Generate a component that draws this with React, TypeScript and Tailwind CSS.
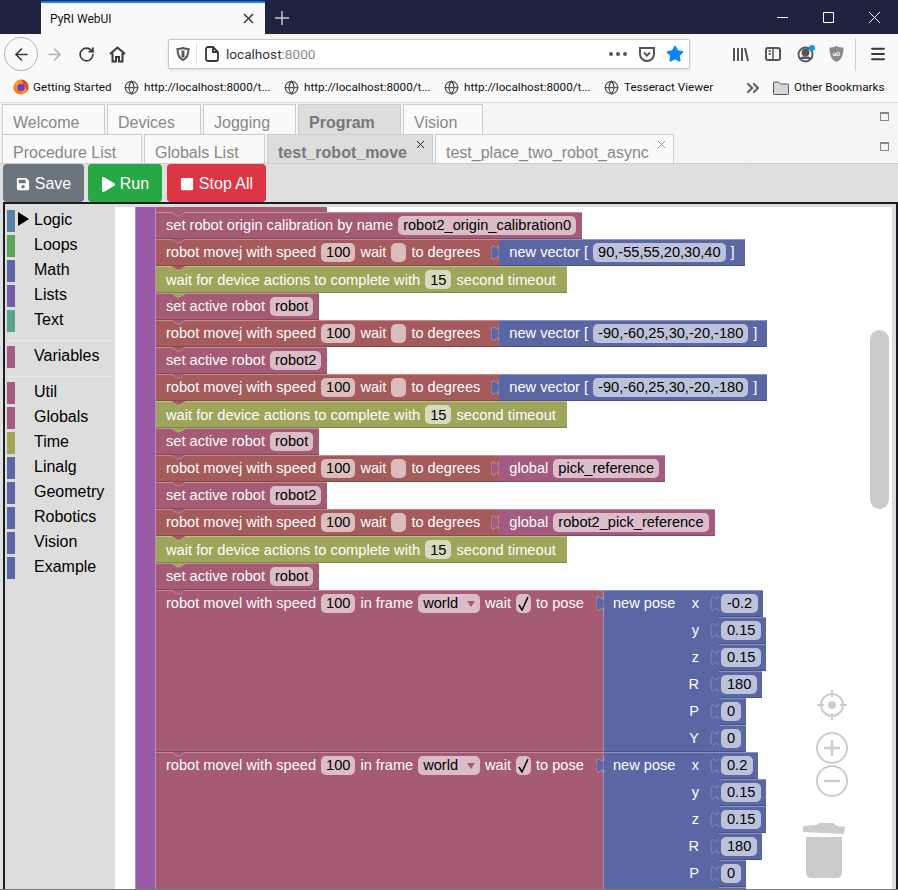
import { ArrowLeft, ArrowRight, ChevronsRight, Globe, Menu, RotateCw, Star } from 'lucide-react';
import { FaPlay, FaSave, FaStop } from 'react-icons/fa';

const sans = "font-['Liberation_Sans',Arial,sans-serif]";
const ui = "font-['Roboto','Noto_Sans',sans-serif]";

const tone = {
  rose: { box: 'bg-[#a55b74] border-t-[#c08c9e] border-b-[#84495d]', fill: '#a55b74' },
  red: { box: 'bg-[#a55b5b] border-t-[#c08c8c] border-b-[#844949]', fill: '#a55b5b' },
  olive: { box: 'bg-[#9fa55b] border-t-[#bcc08c] border-b-[#7f8449]', fill: '#9fa55b' },
  blue: { box: 'bg-[#5b67a5] border-t-[#8c95c0] border-b-[#495284]', fill: '#5b67a5' },
  magenta: { box: 'bg-[#a55b80] border-t-[#c08ca6] border-b-[#844966]', fill: '#a55b80' },
};
type Tone = keyof typeof tone;

function Label({ children }: { children: React.ReactNode }) {
  return <span className="whitespace-nowrap text-white">{children}</span>;
}

function Field({ children, blue, wide }: { children?: React.ReactNode; blue?: boolean; wide?: boolean }) {
  return (
    <span
      className={`flex h-[19px] min-w-[15px] items-center justify-center whitespace-nowrap rounded-[5px] text-black ${
        wide ? 'px-[6px]' : 'px-[5px]'
      } ${blue ? 'bg-[#bdc2db]' : 'bg-white/60'}`}
    >
      {children}
    </span>
  );
}

function Notch({ from }: { from: Tone }) {
  return (
    <svg className="absolute left-[15px] top-[-1px] z-10" width="15" height="5" viewBox="0 0 15 5">
      <path d="M0 0l6 4h3l6-4z" fill={tone[from].fill} />
      <path d="M0 0l6 4h3l6-4" fill="none" stroke="#ffffff" strokeOpacity="0.25" />
    </svg>
  );
}

function Tab({ fill }: { fill: string }) {
  return (
    <svg className="absolute left-[-8px] top-[5px] z-10" width="8" height="15" viewBox="0 0 8 15">
      <path d="M8 0c0 10-8-8-8 7.5s8-2.5 8 7.5z" fill={fill} stroke="#ffffff" strokeOpacity="0.3" />
    </svg>
  );
}

function Vector({ value }: { value: string }) {
  return (
    <div className={`relative flex h-[27px] items-center gap-[5px] border-y pl-[10px] pr-[10px] ${tone.blue.box}`}>
      <Tab fill={tone.blue.fill} />
      <Label>new vector [</Label>
      <Field blue>{value}</Field>
      <Label>]</Label>
    </div>
  );
}

function Global({ name }: { name: string }) {
  return (
    <div className={`relative flex h-[27px] items-center gap-[5px] border-y pl-[10px] pr-[6px] ${tone.magenta.box}`}>
      <Tab fill={tone.magenta.fill} />
      <Label>global</Label>
      <Field>{name}</Field>
    </div>
  );
}

function Statement({ color, from, tight, children }: { color: Tone; from: Tone; tight?: boolean; children: React.ReactNode }) {
  return (
    <div className={`relative flex h-[27px] items-center gap-[5px] border-y pl-[10px] ${tight ? 'pr-[6px]' : 'pr-[11px] text-[14.67px]'} ${tone[color].box}`}>
      <Notch from={from} />
      {children}
    </div>
  );
}

function SetActive({ name, from }: { name: string; from: Tone }) {
  return (
    <Statement color="rose" from={from} tight>
      <Label>set active robot</Label>
      <Field>{name}</Field>
    </Statement>
  );
}

function WaitDevices({ from }: { from: Tone }) {
  return (
    <Statement color="olive" from={from}>
      <Label>wait for device actions to complete with</Label>
      <Field>15</Field>
      <Label>second timeout</Label>
    </Statement>
  );
}

function MoveJ({ from, children }: { from: Tone; children: React.ReactNode }) {
  return (
    <div className="flex">
      <div className={`relative flex h-[27px] items-center gap-[5px] border-y pl-[10px] pr-[19px] ${tone.red.box}`}>
        <Notch from={from} />
        <Label>robot movej with speed</Label>
        <Field>100</Field>
        <Label>wait</Label>
        <Field />
        <Label>to degrees</Label>
      </div>
      {children}
    </div>
  );
}

const pose1 = [
  ['x', '-0.2'],
  ['y', '0.15'],
  ['z', '0.15'],
  ['R', '180'],
  ['P', '0'],
  ['Y', '0'],
];
// the sixth row of this block only shows its top edge at the bottom of the page
const pose2 = [
  ['x', '0.2'],
  ['y', '0.15'],
  ['z', '0.15'],
  ['R', '180'],
  ['P', '0'],
  ['', '\u2007'],
];

function MoveL({ rows }: { rows: string[][] }) {
  return (
    <div className="flex">
      <div className={`relative flex h-[162px] w-[447px] items-start gap-[5px] border-y pl-[10px] pt-[3px] ${tone.rose.box}`}>
        <Notch from="rose" />
        <div className="flex h-[19px] items-center gap-[5px]">
          <Label>robot movel with speed</Label>
          <Field>100</Field>
          <Label>in frame</Label>
          <Field>
            world
            <svg className="ml-[9px]" width="8" height="6" viewBox="0 0 8 6">
              <path d="M0 0h8L4 6z" fill="#a55b74" />
            </svg>
          </Field>
          <Label>wait</Label>
          <span className="flex h-[19px] w-[15px] items-center justify-center rounded-[5px] bg-white/60">
            <svg width="11" height="15" viewBox="0 0 11 15" fill="none" stroke="#000000" strokeWidth="1.500">
              <path d="M1 9l3 5 6-13" />
            </svg>
          </span>
          <Label>to pose</Label>
        </div>
      </div>
      <div className={`relative flex h-[162px] w-[116px] items-start border-y border-l border-l-[#8c95c0] pl-[9px] ${tone.blue.box}`}>
        <Tab fill={tone.blue.fill} />
        <div className="flex h-[25px] items-center">
          <Label>new pose</Label>
        </div>
      </div>
      <div className="relative flex w-[60px] flex-col items-start">
        {rows.map(([axis, value]) => (
          <div key={axis} className="flex h-[27px]">
            <span className="absolute left-[-36px] flex h-[27px] w-[16px] items-center justify-end text-white">{axis}</span>
            <div className={`relative flex h-[27px] items-center border-y pl-[2px] pr-[5px] ${tone.blue.box}`}>
              <svg className="absolute left-[-9px] top-[5px]" width="9" height="15" viewBox="0 0 9 15">
                <path d="M8 0c0 10-7-8-7 7.500s7-2.500 7 7.500" fill="none" stroke="#8c95c0" strokeOpacity="0.8" />
              </svg>
              <Field blue wide>
                {value}
              </Field>
            </div>
          </div>
        ))}
      </div>
    </div>
  );
}

const categories = [
  ['Logic', 'bg-[#5b80a5]'],
  ['Loops', 'bg-[#5ba55b]'],
  ['Math', 'bg-[#5b67a5]'],
  ['Lists', 'bg-[#745ba5]'],
  ['Text', 'bg-[#5ba58c]'],
];
const extras = [
  ['Util', 'bg-[#a55b80]'],
  ['Globals', 'bg-[#a55b80]'],
  ['Time', 'bg-[#9fa55b]'],
  ['Linalg', 'bg-[#5b67a5]'],
  ['Geometry', 'bg-[#5b67a5]'],
  ['Robotics', 'bg-[#5b67a5]'],
  ['Vision', 'bg-[#5b67a5]'],
  ['Example', 'bg-[#5b67a5]'],
];

function Category({ name, color, open }: { name: string; color: string; open?: boolean }) {
  return (
    <div className="flex h-[25px] items-start pl-[2px]">
      <span className={`h-[22px] w-[8px] ${color}`} />
      <span className="flex h-[18px] w-[19px] items-center justify-end pr-[5px]">
        {open && <span className="h-0 w-0 border-y-[7px] border-l-[11px] border-y-transparent border-l-black" />}
      </span>
      <span className="text-[16px] leading-[20px] text-black">{name}</span>
    </div>
  );
}

function Sidebar() {
  return (
    <div className={`flex w-[110px] shrink-0 flex-col bg-[#dddddd] pt-[6px] ${sans}`}>
      {categories.map(([name, color], i) => (
        <Category key={name} name={name} color={color} open={i === 0} />
      ))}
      <div className="my-[5px] ml-[2px] h-px bg-[#e8e8e8]" />
      <Category name="Variables" color="bg-[#a55b80]" />
      <div className="my-[5px] ml-[2px] h-px bg-[#e8e8e8]" />
      {extras.map(([name, color]) => (
        <Category key={name} name={name} color={color} />
      ))}
    </div>
  );
}

function WorkspaceControls() {
  return (
    <>
      <div className="absolute right-[3px] top-[123px] h-[179px] w-[19px] rounded-full bg-[#cccccc]" />
      <svg className="absolute left-[698px] top-[480px]" width="40" height="40" viewBox="0 0 40 40" fill="none" stroke="#cccccc" strokeWidth="2">
        <circle cx="19" cy="18" r="11" />
        <circle cx="19" cy="18" r="4" fill="#cccccc" stroke="none" />
        <path d="M19 3v7M19 26v7M4 18h7M27 18h7" />
      </svg>
      <svg className="absolute left-[700px] top-[524px]" width="34" height="68" viewBox="0 0 34 68" fill="none" stroke="#cccccc" strokeWidth="2">
        <circle cx="17" cy="17" r="15" />
        <path d="M9 17h16M17 9v16" strokeWidth="2.500" />
        <circle cx="17" cy="50" r="15" />
        <path d="M9 50h16" strokeWidth="2.500" />
      </svg>
      <svg className="absolute left-[688px] top-[616px]" width="42" height="56" viewBox="0 0 42 56" fill="#cccccc">
        <path d="M0 3l14-1 2-2h14l4 3 8 1-1 7L0 9z" />
        <path d="M3 14h36v36a5 5 0 0 1-5 5H8a5 5 0 0 1-5-5z" />
      </svg>
    </>
  );
}

function Workspace() {
  return (
    <div className="ml-[3px] flex min-h-0 flex-1 border-x-2 border-t-2 border-[#191c22] bg-[#dddddd] pr-[4px]">
      <Sidebar />
      <div className="relative mt-[3px] flex-1 overflow-hidden bg-white">
        <div className={`flex h-full pl-[20px] text-[14.6px] ${sans}`}>
          <div className="h-full w-[21px] shrink-0 border-x border-x-[#b88cc0] bg-[#995ba5]" />
          <div className="flex flex-col items-start self-start">
            <div className="h-[5px] w-[171px] bg-[#a55b74]" />
            <Statement color="rose" from="rose" tight>
              <Label>set robot origin calibration by name</Label>
              <Field>robot2_origin_calibration0</Field>
            </Statement>
            <MoveJ from="rose">
              <Vector value="90,-55,55,20,30,40" />
            </MoveJ>
            <WaitDevices from="red" />
            <SetActive name="robot" from="olive" />
            <MoveJ from="rose">
              <Vector value="-90,-60,25,30,-20,-180" />
            </MoveJ>
            <SetActive name="robot2" from="red" />
            <MoveJ from="rose">
              <Vector value="-90,-60,25,30,-20,-180" />
            </MoveJ>
            <WaitDevices from="red" />
            <SetActive name="robot" from="olive" />
            <MoveJ from="rose">
              <Global name="pick_reference" />
            </MoveJ>
            <SetActive name="robot2" from="red" />
            <MoveJ from="rose">
              <Global name="robot2_pick_reference" />
            </MoveJ>
            <WaitDevices from="red" />
            <SetActive name="robot" from="olive" />
            <MoveL rows={pose1} />
            <MoveL rows={pose2} />
          </div>
        </div>
        <WorkspaceControls />
      </div>
    </div>
  );
}

function PaneTab({ children, active, close, width }: { children: React.ReactNode; active?: boolean; close?: boolean; width: string }) {
  return (
    <div
      className={`relative flex h-full items-center whitespace-nowrap border border-b-0 border-[#cccccc] pl-[10px] pt-[7px] text-[16px] ${width} ${
        active ? 'bg-[#dddddd] font-bold text-[#777777]' : 'bg-[#fafafa] text-[#888888]'
      }`}
    >
      {children}
      {close && (
        <svg className="absolute right-[7px] top-[5px]" width="9" height="9" viewBox="0 0 9 9" stroke={active ? '#222222' : '#999999'}>
          <path d="M1 1l7 7M8 1l-7 7" fill="none" />
        </svg>
      )}
    </div>
  );
}

function MaxIcon() {
  return <span className="ml-auto mr-[9px] mt-[8px] h-[9px] w-[9px] border border-t-2 border-[#888888]" />;
}

function PaneTabs() {
  return (
    <div
      className={`flex h-[61px] flex-col border-b border-[#cccccc] bg-[#f5f5f5] bg-[repeating-linear-gradient(45deg,transparent_0,transparent_105px,#f0f0f0_105px,#f0f0f0_106px),repeating-linear-gradient(-45deg,transparent_0,transparent_105px,#f0f0f0_105px,#f0f0f0_106px)] pl-[2px] pt-px ${sans}`}
    >
      <div className="flex h-[30px] gap-[2px]">
        <PaneTab width="w-[103px]">Welcome</PaneTab>
        <PaneTab width="w-[94px]">Devices</PaneTab>
        <PaneTab width="w-[93px]">Jogging</PaneTab>
        <PaneTab width="w-[103px]" active>
          Program
        </PaneTab>
        <PaneTab width="w-[80px]">Vision</PaneTab>
        <MaxIcon />
      </div>
      <div className="flex h-[29px] gap-[2px]">
        <PaneTab width="w-[140px]">Procedure List</PaneTab>
        <PaneTab width="w-[121px]">Globals List</PaneTab>
        <PaneTab width="w-[166px]" active close>
          test_robot_move
        </PaneTab>
        <PaneTab width="w-[239px]" close>
          test_place_two_robot_async
        </PaneTab>
        <MaxIcon />
      </div>
    </div>
  );
}

function ActionBar() {
  return (
    <div className={`flex h-[38px] gap-[4px] bg-[#e0e0e0] pl-[3px] text-[16px] text-white ${sans}`}>
      <button className="flex w-[81px] items-center justify-center gap-[5px] rounded bg-[#6c757d] pt-[2px]">
        <FaSave size={14} />
        Save
      </button>
      <button className="flex w-[74px] items-center justify-center gap-[4px] rounded bg-[#28a745] pt-[2px]">
        <FaPlay size={15} />
        Run
      </button>
      <button className="ml-px flex w-[99px] items-center justify-center gap-[5px] rounded bg-[#dc3545] pt-[2px]">
        <FaStop size={14} />
        Stop All
      </button>
    </div>
  );
}

function FirefoxLogo() {
  return (
    <svg width="16" height="16" viewBox="0 0 16 16">
      <circle cx="8" cy="8" r="7.500" fill="#ff9a1f" />
      <path d="M8 .500a7.500 7.500 0 0 1 7.500 7.500c0 2-1 4-2 5 .5-3-1-6-3-7-.5-2-1.500-4-2.500-5.500z" fill="#e8402f" />
      <circle cx="8" cy="8.500" r="3.800" fill="#6a3fd0" />
      <path d="M1 6c1 5 5 8 10 7-3 3-8 2-10-2-.5-1.500-.5-3.500 0-5z" fill="#ff6a1f" />
    </svg>
  );
}

function Bookmark({ label, width }: { label: string; width: string }) {
  return (
    <div className="flex items-center gap-[5px]">
      <Globe size={15} className="text-[#55555a]" strokeWidth={2} />
      <span className={`whitespace-nowrap ${width}`}>{label}</span>
    </div>
  );
}

function BrowserChrome() {
  return (
    <div className={`text-[12px] text-[#111111] ${ui}`}>
      <div className="flex h-[34px] items-end bg-[#1f2340]">
        <div className="ml-[41px] flex h-[33px] w-[224px] items-center border-t-2 border-t-[#0a84ff] bg-[#f9f9fa] pl-[9px] pr-[11px]">
          <span>PyRI WebUI</span>
          <svg className="ml-auto" width="11" height="11" viewBox="0 0 11 11" stroke="#38383d" strokeWidth="1.500">
            <path d="M1 1l9 9M10 1l-9 9" />
          </svg>
        </div>
        <svg className="mb-[9px] ml-[10px]" width="14" height="14" viewBox="0 0 14 14" stroke="#c6c8d2" strokeWidth="1.500">
          <path d="M7 0v14M0 7h14" />
        </svg>
        <div className="mb-[11px] ml-auto flex items-center gap-[35px] pr-[18px]">
          <svg width="11" height="11" viewBox="0 0 11 11" stroke="#ffffff"><path d="M0 5.500h11" /></svg>
          <svg width="11" height="11" viewBox="0 0 11 11" stroke="#ffffff" fill="none"><path d="M.5.500h10v10H.5z" /></svg>
          <svg width="11" height="11" viewBox="0 0 11 11" stroke="#ffffff"><path d="M0 0l11 11M11 0L0 11" /></svg>
        </div>
      </div>

      <div className="flex h-[38px] items-center bg-[#f9f9fa] pt-[2px] text-[#38383d]">
        <div className="ml-[4px] flex h-[34px] w-[34px] items-center justify-center rounded-full border border-[#b1b1b3]">
          <ArrowLeft size={19} />
        </div>
        <ArrowRight size={19} className="ml-[7px] text-[#b1b1b3]" />
        <RotateCw size={17} strokeWidth={2.4} className="ml-[14px]" />
        <svg className="ml-[14px]" width="17" height="17" viewBox="0 0 17 17" fill="none" stroke="#38383d" strokeWidth="2">
          <path d="M1 8l7.500-6.500L16 8M3.500 7v8.500h3.500v-4.500h3v4.500h3.500V7" />
        </svg>
        <div className="ml-[42px] flex h-[30px] w-[522px] items-center rounded-[2px] border border-[#c8c8c8] bg-white shadow-sm">
          <svg className="ml-[7px]" width="14" height="14" viewBox="0 0 14 14" fill="none" stroke="#55555a" strokeWidth="2">
            <path d="M7 1c2 1 3.500 1 5.500 1 0 5-1 9-5.500 11C2.500 11 1.500 7 1.500 2 3.500 2 5 2 7 1z" />
            <path d="M7 3.500v7" strokeWidth="3" />
          </svg>
          <span className="ml-[6px] h-[24px] w-px bg-[#e5e5e5]" />
          <svg className="ml-[8px]" width="14" height="16" viewBox="0 0 14 16" fill="none" stroke="#38383d" strokeWidth="1.800">
            <path d="M3 1h5l5 5v7a2 2 0 0 1-2 2H3a2 2 0 0 1-2-2V3a2 2 0 0 1 2-2zM8 1v5h5" />
          </svg>
          <span className="ml-[7px] text-[13.6px]">
            localhost<span className="text-[#8a8a8f]">:8000</span>
          </span>
          <span className="ml-auto flex gap-[3px]">
            <span className="h-[4px] w-[4px] rounded-full bg-[#55555a]" />
            <span className="h-[4px] w-[4px] rounded-full bg-[#55555a]" />
            <span className="h-[4px] w-[4px] rounded-full bg-[#55555a]" />
          </span>
          <svg className="ml-[12px]" width="16" height="15" viewBox="0 0 16 15" fill="none" stroke="#55555a" strokeWidth="2">
            <path d="M1 1h14v6a7 7 0 0 1-14 0z" />
            <path d="M5 5.500l3 3 3-3" />
          </svg>
          <Star size={18} className="ml-[11px] mr-[5px] text-[#0a84ff]" fill="#0a84ff" />
        </div>
        <div className="ml-[43px] flex items-center text-[#55555a]">
          <svg width="16" height="15" viewBox="0 0 16 15" fill="none" stroke="#55555a" strokeWidth="2">
            <path d="M1 1v13M5 1v13M9 1v13M12 1l3 13" />
          </svg>
          <svg className="ml-[16px]" width="16" height="14" viewBox="0 0 16 14" fill="none" stroke="#55555a" strokeWidth="2">
            <rect x="1" y="1" width="14" height="12" rx="2" />
            <path d="M8 1v12M3.500 4H6M3.500 7H6" strokeWidth="1.500" />
          </svg>
          <svg className="ml-[16px]" width="18" height="18" viewBox="0 0 18 18" fill="none" stroke="#55555a" strokeWidth="1.800">
            <circle cx="8.500" cy="9.500" r="7" />
            <circle cx="8.500" cy="7.500" r="3" fill="#55555a" />
            <path d="M3.500 14c1-2.500 9-2.500 10 0" fill="#55555a" />
            <circle cx="15" cy="3" r="3" fill="#0a9dff" stroke="none" />
          </svg>
          <svg className="ml-[14px]" width="15" height="16" viewBox="0 0 15 16" fill="#8a8a8f">
            <path d="M7.500 0c2.500 1 4.500 1.500 7 1.500 0 7-1.500 12-7 14.500C2 13.500.5 8.500.5 1.500 3 1.500 5 1 7.500 0z" />
            <text x="7.500" y="9.500" fontSize="6" fontWeight="700" fill="#ffffff" stroke="none" textAnchor="middle">
              uO
            </text>
          </svg>
          <span className="ml-[11px] h-[33px] w-px bg-[#d0d0d0]" />
          <Menu size={18} className="ml-[13px] text-[#38383d]" strokeWidth={2.4} />
        </div>
      </div>

      <div className="flex h-[31px] items-center border-b border-[#e0e0e0] bg-[#f9f9fa] pt-[1px] text-[11.7px]">
        <div className="ml-[13px] flex items-center gap-[4px]">
          <FirefoxLogo />
          <span className="w-[79px] whitespace-nowrap">Getting Started</span>
        </div>
        <div className="ml-[12px] flex gap-[12px]">
          <Bookmark label="http://localhost:8000/t..." width="w-[128px]" />
          <Bookmark label="http://localhost:8000/t..." width="w-[128px]" />
          <Bookmark label="http://localhost:8000/t..." width="w-[128px]" />
          <Bookmark label="Tesseract Viewer" width="w-[85px]" />
        </div>
        <ChevronsRight size={20} strokeWidth={2.2} className="ml-[34px] text-[#55555a]" />
        <svg className="ml-[10px]" width="16" height="14" viewBox="0 0 16 14" fill="#d7d7db" stroke="#55555a">
          <path d="M.5 2a1 1 0 0 1 1-1h4l2 2h7a1 1 0 0 1 1 1v8.500a1 1 0 0 1-1 1h-13a1 1 0 0 1-1-1z" />
        </svg>
        <span className="ml-[5px] whitespace-nowrap">Other Bookmarks</span>
      </div>
    </div>
  );
}

export default function App() {
  return (
    <div className="flex h-[890px] w-[898px] flex-col overflow-hidden border-b border-[#777777] bg-[#e0e0e0]">
      <BrowserChrome />
      <PaneTabs />
      <ActionBar />
      <Workspace />
    </div>
  );
}
